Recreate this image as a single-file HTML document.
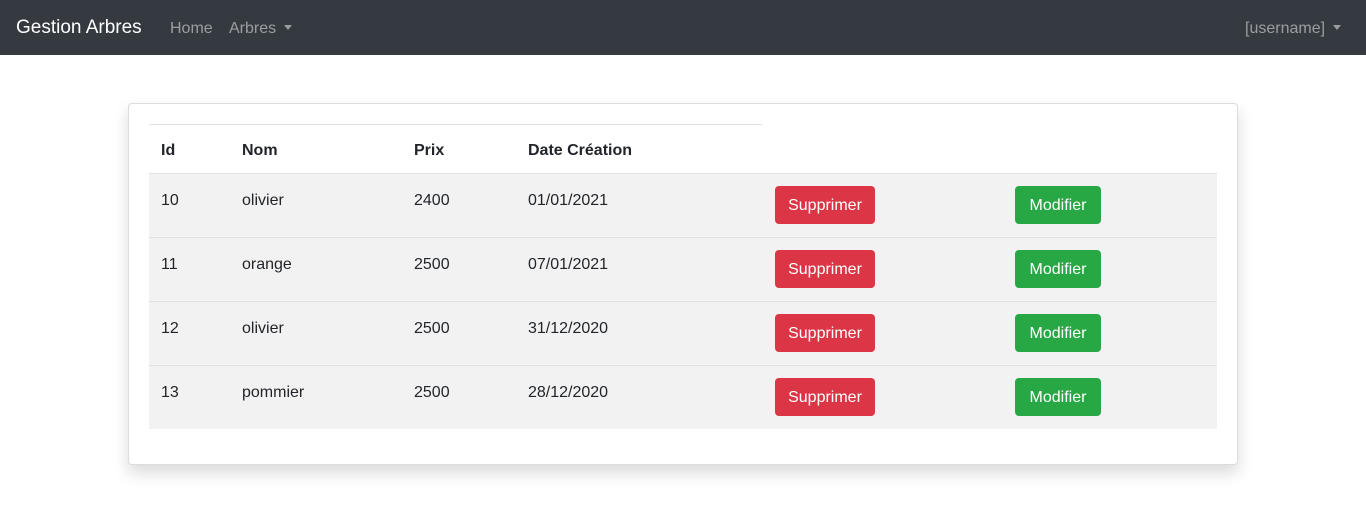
<!DOCTYPE html>
<html><head><meta charset="utf-8"><style>
body{margin:0;width:1366px;height:518px;background:#fff;font-family:"Liberation Sans",sans-serif;font-size:16px;color:#212529;position:relative;overflow:hidden}
.nav{position:absolute;left:0;top:0;width:1366px;height:55px;background:#343a40}
.abs{position:absolute;white-space:nowrap}
.card{position:absolute;left:128px;top:103px;width:1108px;height:360px;border:1px solid #dcdcdc;border-radius:4px;box-shadow:0 8px 16px rgba(0,0,0,.15);background:#fff}
.row{position:absolute;left:149px;width:1068px;height:63px;background:#f2f2f2;border-top:1px solid #dee2e6}
.btn{position:absolute;height:38px;line-height:40px;color:#fff;border-radius:4px;text-align:center;font-size:16px}
.r{background:#dc3545;width:100px;left:626px;top:12px}
.g{background:#28a745;width:86px;left:866px;top:12px}
.c{position:absolute;top:18px}
.caret{display:inline-block;border-top:5px solid currentColor;border-left:4.5px solid transparent;border-right:4.5px solid transparent;vertical-align:3px;margin-left:8px}
</style></head><body>
<div class="nav">
<div class="abs" style="left:16px;top:17px;font-size:19px;color:#fff">Gestion Arbres</div>
<div class="abs" style="left:170px;top:20px;color:rgba(255,255,255,.5)">Home</div>
<div class="abs" style="left:229px;top:20px;color:rgba(255,255,255,.5)">Arbres<span class="caret"></span></div>
<div class="abs" style="left:1245px;top:20px;color:rgba(255,255,255,.5)">[username]<span class="caret"></span></div>
</div>
<div class="card"></div>
<div class="abs" style="left:149px;top:124px;width:613px;border-top:1px solid #dee2e6"></div>
<div class="abs" style="left:161px;top:142px;font-weight:bold">Id</div>
<div class="abs" style="left:242px;top:142px;font-weight:bold">Nom</div>
<div class="abs" style="left:414px;top:142px;font-weight:bold">Prix</div>
<div class="abs" style="left:528px;top:142px;font-weight:bold">Date Création</div>

<div class="row" style="top:173px"><span class="c" style="left:12px">10</span><span class="c" style="left:93px">olivier</span><span class="c" style="left:265px">2400</span><span class="c" style="left:379px">01/01/2021</span><div class="btn r">Supprimer</div><div class="btn g">Modifier</div></div>
<div class="row" style="top:237px"><span class="c" style="left:12px">11</span><span class="c" style="left:93px">orange</span><span class="c" style="left:265px">2500</span><span class="c" style="left:379px">07/01/2021</span><div class="btn r">Supprimer</div><div class="btn g">Modifier</div></div>
<div class="row" style="top:301px"><span class="c" style="left:12px">12</span><span class="c" style="left:93px">olivier</span><span class="c" style="left:265px">2500</span><span class="c" style="left:379px">31/12/2020</span><div class="btn r">Supprimer</div><div class="btn g">Modifier</div></div>
<div class="row" style="top:365px"><span class="c" style="left:12px">13</span><span class="c" style="left:93px">pommier</span><span class="c" style="left:265px">2500</span><span class="c" style="left:379px">28/12/2020</span><div class="btn r">Supprimer</div><div class="btn g">Modifier</div></div>
</body></html>
